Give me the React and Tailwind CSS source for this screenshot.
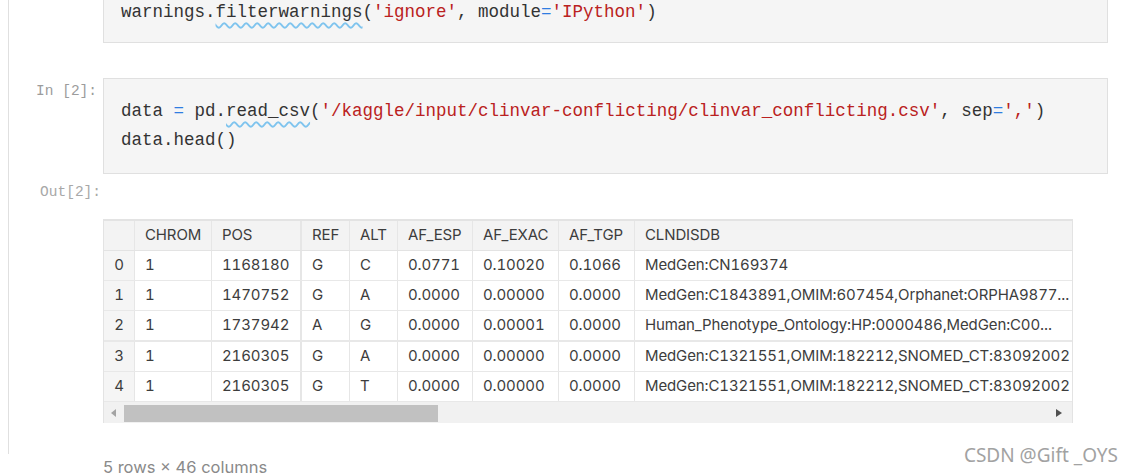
import React from 'react';

// --- notebook pieces ---

const Str = ({ children }) => <span className="text-[#ba2121]">{children}</span>;
const Op = ({ children }) => <span className="text-[#2f7de1]">{children}</span>;
const Squiggle = ({ children }) => (
  <span className="underline decoration-wavy decoration-[#7fc4ee] decoration-[1.5px] underline-offset-[5px]">{children}</span>
);

const columns = [
  { key: 'CHROM', w: 'w-[77px]' },
  { key: 'POS', w: 'w-[90px]', thick: true },
  { key: 'REF', w: 'w-[48px]' },
  { key: 'ALT', w: 'w-[48px]' },
  { key: 'AF_ESP', w: 'w-[75px]' },
  { key: 'AF_EXAC', w: 'w-[86px]' },
  { key: 'AF_TGP', w: 'w-[76px]' },
  { key: 'CLNDISDB', w: 'w-[520px]' },
  { key: 'CLNDISDBINCL', w: 'w-[160px]' },
];

const rows = [
  ['1', '1168180', 'G', 'C', '0.0771', '0.10020', '0.1066', 'MedGen:CN169374', 'NaN'],
  ['1', '1470752', 'G', 'A', '0.0000', '0.00000', '0.0000', 'MedGen:C1843891,OMIM:607454,Orphanet:ORPHA9877...', 'NaN'],
  ['1', '1737942', 'A', 'G', '0.0000', '0.00001', '0.0000', 'Human_Phenotype_Ontology:HP:0000486,MedGen:C00...', 'NaN'],
  ['1', '2160305', 'G', 'A', '0.0000', '0.00000', '0.0000', 'MedGen:C1321551,OMIM:182212,SNOMED_CT:83092002', 'NaN'],
  ['1', '2160305', 'G', 'T', '0.0000', '0.00000', '0.0000', 'MedGen:C1321551,OMIM:182212,SNOMED_CT:83092002', 'NaN'],
];

const Cell = ({ col, children }) => (
  <div
    className={`${col.w} shrink-0 h-full flex items-center pl-[10px] whitespace-nowrap overflow-hidden ${col.thick ? 'border-r-2' : 'border-r'} border-[#e6e6e6]`}
  >
    {children}
  </div>
);

const DataFrame = () => (
  <div className="w-[970px] border-x border-t-2 border-[#e3e3e3] overflow-hidden text-[15px] tracking-[-0.12px] text-[#3d3d3d] tabular-nums font-['Inter','Liberation_Sans',sans-serif]">
    <div className="w-max">
      {/* header */}
      <div className="flex h-[30px] bg-[#f3f3f3] border-b border-[#e3e3e3]">
        <div className="w-[31px] shrink-0 h-full border-r border-[#e6e6e6]" />
        {columns.map(c => (
          <Cell key={c.key} col={c}>{c.key}</Cell>
        ))}
      </div>
      {rows.map((r, i) => (
        <div
          key={i}
          className={`flex ${i === 2 ? 'h-[31px] border-b-2' : 'h-[30px] border-b'} border-[#e8e8e8]`}
        >
          <div className="w-[31px] shrink-0 h-full flex items-center justify-center bg-[#f5f5f5] border-r border-[#e6e6e6]">
            {i}
          </div>
          {columns.map((c, j) => (
            <Cell key={c.key} col={c}>{r[j]}</Cell>
          ))}
        </div>
      ))}
    </div>
    {/* horizontal scrollbar */}
    <div className="flex items-center h-[21px] bg-[#f1f1f1]">
      <div className="w-[20px] h-full flex items-center justify-center">
        <svg width="6" height="8" viewBox="0 0 6 8"><path d="M5 0 L0 4 L5 8 Z" fill="#a3a3a3" /></svg>
      </div>
      <div className="w-[314px] h-[17px] mt-[2px] bg-[#c1c1c1]" />
      <div className="flex-1" />
      <div className="w-[20px] h-full flex items-center justify-center mr-[3px]">
        <svg width="6" height="8" viewBox="0 0 6 8"><path d="M0 0 L6 4 L0 8 Z" fill="#505050" /></svg>
      </div>
    </div>
  </div>
);

export default function App() {
  return (
    <div className="relative w-[1133px] h-[475px] overflow-hidden bg-white">
      <div className="ml-[8px] h-full border-l border-[#e0e0e0]">
        {/* cell 1 (scrolled off top) */}
        <div className="flex mt-[-21px]">
          <div className="w-[94px] shrink-0" />
          <div className="w-[1005px] bg-[#f5f5f5] border border-[#e0e0e0] pl-[17px] pt-[18px] pb-[15px] font-['Liberation_Mono',monospace] text-[17.5px] leading-[29px] text-[#333] whitespace-pre">
            warnings.<Squiggle>filterwarnings</Squiggle>(<Str>'ignore'</Str>, module<Op>=</Op><Str>'IPython'</Str>)
          </div>
        </div>

        {/* cell 2 */}
        <div className="flex mt-[35px]">
          <div className="w-[94px] shrink-0 pt-[3px] pr-[6px] text-right font-['Liberation_Mono',monospace] text-[14.5px] leading-[20px] text-[#9c9c9c]">
            In [2]:
          </div>
          <div className="w-[1005px] bg-[#f5f5f5] border border-[#e0e0e0] pl-[17px] py-[18px] font-['Liberation_Mono',monospace] text-[17.5px] leading-[29px] text-[#333] whitespace-pre">
            <div>
              data <Op>=</Op> pd.<Squiggle>read_csv</Squiggle>(<Str>'/kaggle/input/clinvar-conflicting/clinvar_conflicting.csv'</Str>, sep<Op>=</Op><Str>','</Str>)
            </div>
            <div>data.head()</div>
          </div>
        </div>

        {/* output */}
        <div className="flex">
          <div className="w-[94px] shrink-0 pt-[8px] pr-[2px] text-right font-['Liberation_Mono',monospace] text-[14.5px] leading-[20px] text-[#a8a8a8]">
            Out[2]:
          </div>
          <div className="pt-[45px]">
            <DataFrame />
            <p className="mt-[32px] text-[16.5px] leading-[24px] text-[#8a8a8a] font-['Inter','Liberation_Sans',sans-serif]">
              5 rows × 46 columns
            </p>
          </div>
        </div>
      </div>

      {/* watermark */}
      <div className="absolute right-[15px] top-[442px] text-[19px] leading-[26px] text-[#a2a2a2] font-['Noto_Sans','Liberation_Sans',sans-serif]">
        CSDN @Gift _OYS
      </div>
    </div>
  );
}
